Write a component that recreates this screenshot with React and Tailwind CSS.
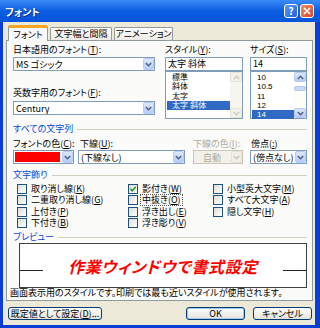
import React from 'react';

const M = ({ k }) => (
  <>
    (<span className="underline">{k}</span>)
  </>
);

const Chevron = ({ up, color = '#4D6185' }) => (
  <svg width="7" height="5" viewBox="0 0 7 5">
    <path
      d={up ? 'M0.8 4 L3.5 1.3 L6.2 4' : 'M0.8 1 L3.5 3.7 L6.2 1'}
      fill="none"
      stroke={color}
      strokeWidth="1.5"
    />
  </svg>
);

const DropBtn = ({ disabled }) => (
  <div
    className={
      disabled
        ? 'flex w-[11px] items-center justify-center rounded-[2px] border border-[#E3E1D6] bg-[#F1EFE6]'
        : 'flex w-[11px] items-center justify-center rounded-[2px] border border-[#BACCF6] bg-linear-to-b from-[#DDE8FE] to-[#B7CBF8]'
    }
  >
    <Chevron color={disabled ? '#C9C7BA' : '#4D6185'} />
  </div>
);

const Combo = ({ className = '', children, disabled }) => (
  <div
    className={`flex h-[14px] items-stretch border ${
      disabled ? 'border-[#C9C7BA] bg-[#F3F2EA] text-[#ACA899]' : 'border-[#7F9DB9] bg-white'
    } ${className}`}
  >
    <div className="flex flex-1 items-center overflow-hidden whitespace-nowrap pl-[2px] leading-none">{children}</div>
    <DropBtn disabled={disabled} />
  </div>
);

const ScrollBtn = ({ up, disabled }) => (
  <div
    className={
      disabled
        ? 'flex h-[10px] items-center justify-center rounded-[2px] border border-[#E6E4DA] bg-[#F3F2EA]'
        : 'flex h-[10px] items-center justify-center rounded-[2px] border border-[#B5C8F2] bg-linear-to-b from-[#DCE7FD] to-[#B8CCF9]'
    }
  >
    <Chevron up={up} color={disabled ? '#CFCDC2' : '#4D6185'} />
  </div>
);

// list rows are tighter than the font's line box, so lead with a Latin face for the metrics
const List = ({ items, selected, disabled, thumb }) => (
  <div className="flex h-[48px] border border-[#7F9DB9] bg-white">
    <div className="flex flex-1 flex-col pl-[1px] pt-px font-['Liberation_Sans','Noto_Sans_CJK_JP',sans-serif] text-[8px]">
      {items.map((it) => (
        <div
          key={it}
          className={`h-[9.3px] whitespace-nowrap pl-[5px] leading-[9.3px] ${
            it === selected ? 'bg-[#316AC5] text-white' : ''
          }`}
        >
          {it}
        </div>
      ))}
    </div>
    <div className={`flex w-[12px] flex-col justify-between ${disabled ? 'bg-[#F6F5EF]' : 'bg-[#FDFDFA]'}`}>
      <ScrollBtn up disabled={disabled} />
      {thumb && (
        <div className="-mt-[14px] h-[5px] rounded-[2px] border border-[#B5C8F2] bg-[#C9D8FB]" />
      )}
      <ScrollBtn disabled={disabled} />
    </div>
  </div>
);

const Check = ({ checked, focus, children }) => (
  <div className="flex h-[11.5px] items-center">
    <span className="flex h-[10px] w-[10px] items-center justify-center border border-[#1C5180] bg-linear-to-br from-[#DCDCD7] to-white">
      {checked && (
        <svg width="8" height="8" viewBox="0 0 8 8">
          <path d="M1.3 3.8 L3.2 5.8 L6.8 1.8" fill="none" stroke="#21A121" strokeWidth="1.6" />
        </svg>
      )}
    </span>
    <span className={`ml-[3px] whitespace-nowrap px-px leading-[10px] ${focus ? 'outline outline-1 outline-dotted outline-[#555]' : ''}`}>
      {children}
    </span>
  </div>
);

const Group = ({ children }) => (
  <div className="flex h-[12px] items-center">
    <span className="whitespace-nowrap pr-[4px] text-[#0046D5]">{children}</span>
    <div className="h-px flex-1 bg-[#D0D0BF]" />
  </div>
);

const XpButton = ({ className = '', def, children }) => (
  <div
    className={`flex h-[13px] items-center justify-center rounded-[3px] border border-[#003C74] bg-linear-to-b from-white to-[#E3E2DA] leading-none ${
      def ? 'shadow-[inset_0_0_0_1px_#A9C6F2]' : ''
    } ${className}`}
  >
    {children}
  </div>
);

export default function App() {
  return (
    <div className="flex h-[328px] w-[320px] flex-col bg-[#0A3ED4] font-['Noto_Sans_CJK_JP',sans-serif] text-[9px] text-black [font-feature-settings:'palt']">
      {/* title bar */}
      <div className="flex h-[22px] items-center bg-linear-to-b from-[#3A8BF5] via-[#0A5DE2] to-[#0754DA] pl-[5px] pr-[6px]">
        <span className="flex-1 text-[10px] font-bold text-white [text-shadow:1px_1px_#0B2E9C]">フォント</span>
        <div className="flex gap-[2px]">
          <div className="flex h-[14px] w-[14px] items-center justify-center rounded-[3px] border border-white bg-linear-to-br from-[#5B9BFF] to-[#1D5CE0] text-[10px] font-bold leading-none text-white">
            ?
          </div>
          <div className="flex h-[14px] w-[14px] items-center justify-center rounded-[3px] border border-white bg-linear-to-br from-[#F08C6A] to-[#D8421C]">
            <svg width="8" height="8" viewBox="0 0 8 8">
              <path d="M1 1 L7 7 M7 1 L1 7" stroke="white" strokeWidth="1.7" />
            </svg>
          </div>
        </div>
      </div>

      {/* body */}
      <div className="ml-[3px] mr-[5px] mb-[3px] flex flex-1 flex-col bg-[#ECE9D8] pt-[3px]">
        {/* tabs */}
        <div className="flex h-[15px] items-end pl-[5px]">
          <div className="relative z-10 -mb-px flex h-[16px] w-[40px] items-center justify-center rounded-t-[2px] border-x border-t-[3px] border-x-[#919B9C] border-t-[#F5A623] bg-[#FCFCFE]">
            フォント
          </div>
          <div className="ml-[2px] flex h-[13px] w-[62px] items-center justify-center rounded-t-[2px] border-x border-t border-[#919B9C] bg-linear-to-b from-white to-[#ECEBE5]">
            文字幅と間隔
          </div>
          <div className="ml-[2px] flex h-[13px] w-[59px] items-center justify-center rounded-t-[2px] border-x border-t border-[#919B9C] bg-linear-to-b from-white to-[#ECEBE5]">
            アニメーション
          </div>
        </div>

        {/* panel */}
        <div className="ml-[3px] mr-[2px] flex flex-col border border-[#919B9C] bg-[#FBFBF9] pb-[2px] pl-[6px] pr-[5px] pt-[3px]">
          <div className="flex">
            <div className="flex w-[142px] flex-col">
              <div className="h-[13px] leading-[12px]">
                日本語用のフォント<M k="T" />:
              </div>
              <Combo>MS ゴシック</Combo>
              <div className="mt-[16px] h-[14px] leading-[12px]">
                英数字用のフォント<M k="F" />:
              </div>
              <Combo>Century</Combo>
            </div>
            <div className="ml-[10px] flex w-[78px] flex-col">
              <div className="h-[13px] leading-[12px]">
                スタイル<M k="Y" />:
              </div>
              <div className="flex h-[14px] items-center border border-[#7F9DB9] bg-white pl-[2px]">太字 斜体</div>
              <List items={['標準', '斜体', '太字', '太字 斜体']} selected="太字 斜体" disabled />
            </div>
            <div className="ml-[7px] flex w-[57px] flex-col">
              <div className="h-[13px] leading-[12px]">
                サイズ<M k="S" />:
              </div>
              <div className="flex h-[14px] items-center border border-[#7F9DB9] bg-white pl-[2px]">14</div>
              <List items={['10', '10.5', '11', '12', '14']} selected="14" thumb />
            </div>
          </div>

          <div className="mt-[4px]">
            <Group>すべての文字列</Group>
          </div>

          <div className="mt-[2px] flex h-[13px] items-center">
            <span className="w-[67px]">
              フォントの色<M k="C" />:
            </span>
            <span className="w-[113px]">
              下線<M k="U" />:
            </span>
            <span className="w-[58px] text-[#ACA899]">
              下線の色<M k="I" />:
            </span>
            <span>
              傍点<M k=":" />
            </span>
          </div>
          <div className="flex">
            <div className="flex h-[14px] w-[61px] items-stretch border border-[#7F9DB9] bg-white">
              <div className="flex flex-1 items-center px-[1px]">
                <div className="h-[10px] w-[45px] bg-[#FF0000]" />
              </div>
              <DropBtn />
            </div>
            <Combo className="ml-[4px] w-[107px]">(下線なし)</Combo>
            <Combo className="ml-[8px] w-[50px]" disabled>
              <span className="pl-[7px]">自動</span>
            </Combo>
            <Combo className="ml-[7px] w-[57px]">(傍点なし)</Combo>
          </div>

          <div className="mt-[5px]">
            <Group>文字飾り</Group>
          </div>

          <div className="mt-[2px] flex pl-[4px]">
            <div className="flex w-[111px] flex-col">
              <Check>取り消し線<M k="K" /></Check>
              <Check>二重取り消し線<M k="G" /></Check>
              <Check>上付き<M k="P" /></Check>
              <Check>下付き<M k="B" /></Check>
            </div>
            <div className="flex w-[85px] flex-col">
              <Check checked>影付き<M k="W" /></Check>
              <Check focus>中抜き<M k="O" /></Check>
              <Check>浮き出し<M k="E" /></Check>
              <Check>浮き彫り<M k="V" /></Check>
            </div>
            <div className="flex flex-col">
              <Check>小型英大文字<M k="M" /></Check>
              <Check>すべて大文字<M k="A" /></Check>
              <Check>隠し文字<M k="H" /></Check>
            </div>
          </div>

          <div className="mt-[2px]">
            <Group>プレビュー</Group>
          </div>

          <div className="ml-[6px] flex h-[45px] items-center border border-[#404040] bg-white">
            <div className="mt-[9px] h-px w-[23px] bg-[#222]" />
            <div className="flex-1 text-center text-[16px] font-bold italic leading-none tracking-[0.6px] text-[#FF0000]">
              作業ウィンドウで書式設定
            </div>
            <div className="mt-[9px] h-px w-[23px] bg-[#222]" />
          </div>

          <div className="-ml-[3px] h-[10px] whitespace-nowrap leading-[10px]">
            画面表示用のスタイルです。印刷では最も近いスタイルが使用されます。
          </div>
        </div>

        {/* buttons */}
        <div className="mt-[6px] flex pl-[5px] pr-[3px]">
          <XpButton className="w-[94px]">
            既定値として設定<M k="D" />...
          </XpButton>
          <div className="flex-1" />
          <XpButton className="w-[59px]" def>
            OK
          </XpButton>
          <XpButton className="ml-[8px] w-[59px]">キャンセル</XpButton>
        </div>
      </div>
    </div>
  );
}
